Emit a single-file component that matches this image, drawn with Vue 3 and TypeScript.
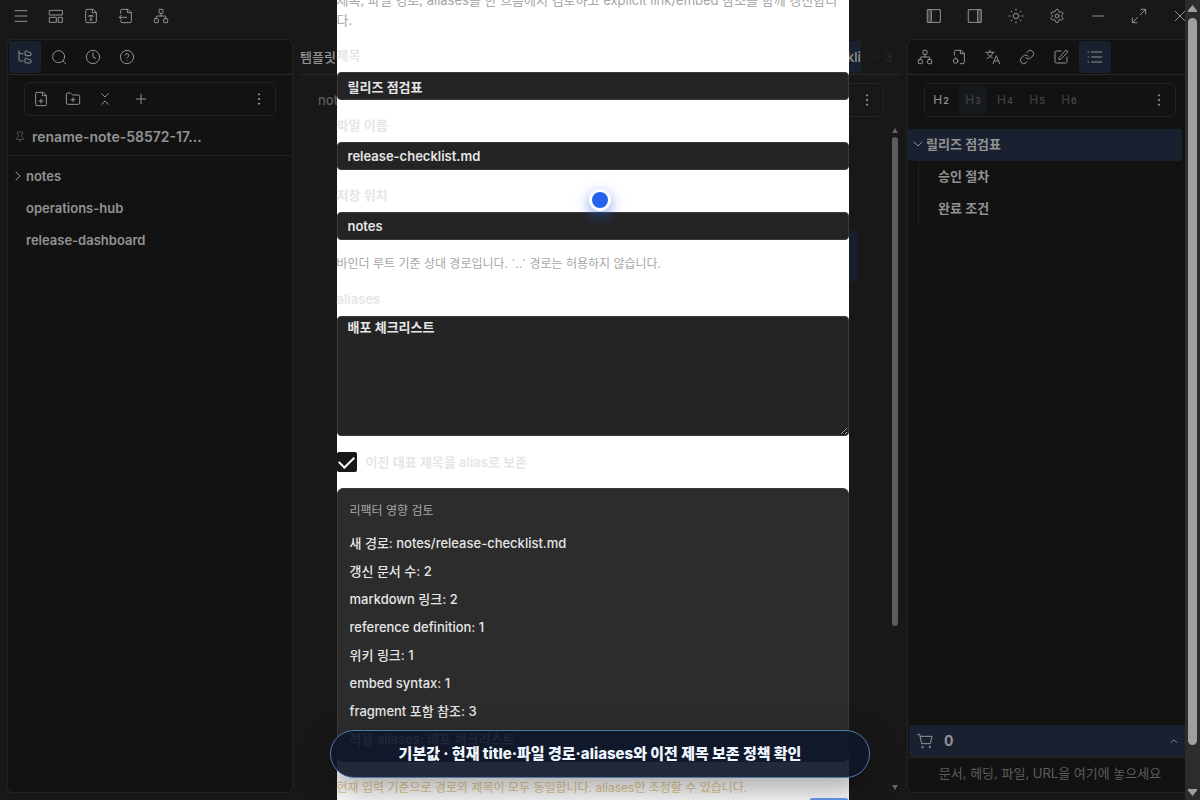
<script setup lang="ts">
import { ref } from 'vue'

interface Tool {
  name: string
  label: string
}

const icons: Record<string, string> = {
  menu: '<path d="M3 4h18M3 12h18M3 20h18"/>',
  layout: '<rect x="2.500" y="3.500" width="19" height="7"/><rect x="2.500" y="14" width="10" height="7.500"/><rect x="16" y="14" width="5.500" height="7.500"/>',
  fileType: '<path d="M15 2H6a2 2 0 0 0-2 2v16a2 2 0 0 0 2 2h12a2 2 0 0 0 2-2V7z"/><path d="M14 2v5h6M9 13v-1.500h6V13M12 11.500V18M10.500 18h3"/>',
  fileImport: '<path d="M4 8V4a2 2 0 0 1 2-2h9l5 5v13a2 2 0 0 1-2 2H6a2 2 0 0 1-2-2v-1"/><path d="M14 2v5h6M13 14H2M5 11l-3 3 3 3"/>',
  network: '<rect x="9" y="2" width="6" height="6" rx="1"/><rect x="2" y="16" width="6" height="6" rx="1"/><rect x="16" y="16" width="6" height="6" rx="1"/><path d="M5 16v-3a1 1 0 0 1 1-1h12a1 1 0 0 1 1 1v3M12 12V8"/>',
  folderTree: '<path d="M20 10a1 1 0 0 0 1-1V6a1 1 0 0 0-1-1h-2.500a1 1 0 0 1-.8-.4l-.9-1.200A1 1 0 0 0 15 3h-2a1 1 0 0 0-1 1v5a1 1 0 0 0 1 1ZM20 21a1 1 0 0 0 1-1v-3a1 1 0 0 0-1-1h-2.900a1 1 0 0 1-.88-.55l-.42-.85a1 1 0 0 0-.92-.6H13a1 1 0 0 0-1 1v5a1 1 0 0 0 1 1ZM3 5a2 2 0 0 0 2 2h4M3 3v13a2 2 0 0 0 2 2h4"/>',
  search: '<circle cx="11.500" cy="11.500" r="9"/><path d="m22 22-4-4"/>',
  clock: '<circle cx="12" cy="12" r="10"/><path d="M12 6v6l4 2"/>',
  help: '<circle cx="12" cy="12" r="10"/><path d="M9.100 9a3 3 0 0 1 5.800 1c0 2-3 3-3 3M12 17h.01"/>',
  filePlus: '<path d="M15 2H6a2 2 0 0 0-2 2v16a2 2 0 0 0 2 2h12a2 2 0 0 0 2-2V7z"/><path d="M14 2v5h6M9 15h6M12 18v-6"/>',
  folderPlus: '<path d="M12 10v6M9 13h6M20 20a2 2 0 0 0 2-2V8a2 2 0 0 0-2-2h-7.900a2 2 0 0 1-1.690-.9L9.600 3.900A2 2 0 0 0 7.930 3H4a2 2 0 0 0-2 2v13a2 2 0 0 0 2 2Z"/>',
  collapse: '<path d="m7 20 5-5 5 5M7 4l5 5 5-5"/>',
  plus: '<path d="M5 12h14M12 5v14"/>',
  more: '<g fill="currentColor"><circle cx="12" cy="5" r="1"/><circle cx="12" cy="12" r="1"/><circle cx="12" cy="19" r="1"/></g>',
  pin: '<path d="M12 17v5M9 10.800a2 2 0 0 1-1.100 1.800l-1.800.9A2 2 0 0 0 5 15.200V16a1 1 0 0 0 1 1h12a1 1 0 0 0 1-1v-.8a2 2 0 0 0-1.100-1.800l-1.800-.9A2 2 0 0 1 15 10.800V7a1 1 0 0 1 1-1 2 2 0 0 0 0-4H8a2 2 0 0 0 0 4 1 1 0 0 1 1 1z"/>',
  right: '<path d="m8 4 8 8-8 8"/>',
  down: '<path d="m4 8 8 8 8-8"/>',
  up: '<path d="m5 16 7-7 7 7"/>',
  sideLeft: '<rect x="2.500" y="2.500" width="19" height="19"/><path d="M8 2.500v19"/><path d="M5.200 3v18" stroke-opacity=".4" stroke-width="4"/>',
  sideRight: '<rect x="2.500" y="2.500" width="19" height="19"/><path d="M16 2.500v19"/><path d="M18.800 3v18" stroke-opacity=".4" stroke-width="4"/>',
  sun: '<circle cx="12" cy="12" r="4"/><path d="M12 1.500v2M12 20.500v2M4.600 4.600 6 6M18 18l1.400 1.400M1.500 12h2M20.500 12h2M6 18l-1.400 1.400M19.400 4.600 18 6"/>',
  gear: '<path d="M9.700 4.100a2.340 2.340 0 0 1 4.660 0 2.340 2.340 0 0 0 3.320 1.900 2.340 2.340 0 0 1 2.330 4 2.340 2.340 0 0 0 0 3.900 2.340 2.340 0 0 1-2.330 4 2.340 2.340 0 0 0-3.320 1.900 2.340 2.340 0 0 1-4.660 0 2.340 2.340 0 0 0-3.320-1.900 2.340 2.340 0 0 1-2.330-4 2.340 2.340 0 0 0 0-3.900A2.340 2.340 0 0 1 6.380 6a2.340 2.340 0 0 0 3.320-1.900"/><circle cx="12" cy="12" r="3"/>',
  minus: '<path d="M4 12h16"/>',
  expand: '<path d="M15 2h7v7M9 22H2v-7M22 2l-8 8M2 22l8-8"/>',
  close: '<path d="M5 5l14 14M19 5 5 19"/>',
  fileCog: '<path d="M5 9V4a2 2 0 0 1 2-2h8l5 5v13a2 2 0 0 1-2 2h-4"/><path d="M14 2v5h6"/><circle cx="7" cy="18" r="3.500"/><path d="M7 13v1.500"/>',
  translate: '<path d="M1 5h13M7.500 2v3M3 14c4-1 8-5 9-9M4 7c1 3 4 5 7 6M12 22l5-12 5 12M14 18h6"/>',
  link: '<path d="M10 13a5 5 0 0 0 7.540.54l3-3a5 5 0 0 0-7.070-7.070l-1.720 1.710"/><path d="M14 11a5 5 0 0 0-7.540-.54l-3 3a5 5 0 0 0 7.070 7.070l1.710-1.710"/>',
  edit: '<path d="M12 3H5a2 2 0 0 0-2 2v14a2 2 0 0 0 2 2h14a2 2 0 0 0 2-2v-7"/><path d="M18.400 2.600a2.100 2.100 0 0 1 3 3L12.400 14.600a2 2 0 0 1-.85.5l-2.900.85.85-2.900a2 2 0 0 1 .5-.85z"/>',
  list: '<path d="M7 4.500h15M7 12h15M7 19.500h15M1.500 4.500h1M1.500 12h1M1.500 19.500h1"/>',
  cart: '<circle cx="8" cy="21" r="1"/><circle cx="19" cy="21" r="1"/><path d="M1 2h3l3 14h13l2.500-11H5"/>',
}

const headerLeft: Tool[] = [
  { name: 'menu', label: '메뉴' },
  { name: 'layout', label: '레이아웃' },
  { name: 'fileType', label: '템플릿' },
  { name: 'fileImport', label: '가져오기' },
  { name: 'network', label: '그래프' },
]
const headerRight: Tool[] = [
  { name: 'sideLeft', label: '왼쪽 패널' },
  { name: 'sideRight', label: '오른쪽 패널' },
  { name: 'sun', label: '테마' },
  { name: 'gear', label: '설정' },
  { name: 'minus', label: '최소화' },
  { name: 'expand', label: '최대화' },
  { name: 'close', label: '닫기' },
]
const leftTabs: Tool[] = [
  { name: 'folderTree', label: '탐색기' },
  { name: 'search', label: '검색' },
  { name: 'clock', label: '최근' },
  { name: 'help', label: '도움말' },
]
const rightTabs: Tool[] = [
  { name: 'network', label: '그래프' },
  { name: 'fileCog', label: '속성' },
  { name: 'translate', label: '번역' },
  { name: 'link', label: '링크' },
  { name: 'edit', label: '편집' },
  { name: 'list', label: '개요' },
]
const treeTools: Tool[] = [
  { name: 'filePlus', label: '새 문서' },
  { name: 'folderPlus', label: '새 폴더' },
  { name: 'collapse', label: '모두 접기' },
  { name: 'plus', label: '추가' },
]
const levels = [2, 3, 4, 5, 6]
const summary = [
  '새 경로: notes/release-checklist.md',
  '갱신 문서 수: 2',
  'markdown 링크: 2',
  'reference definition: 1',
  '위키 링크: 1',
  'embed syntax: 1',
  'fragment 포함 참조: 3',
  '적용 aliases: 배포 체크리스트',
]

const title = ref('릴리즈 점검표')
const fileName = ref('release-checklist.md')
const folder = ref('notes')
const aliases = ref('배포 체크리스트')
const keepTitle = ref(true)
</script>

<template>
  <div class="app">
    <header class="topbar">
      <nav class="top-left">
        <button v-for="t in headerLeft" :key="t.name" type="button" :aria-label="t.label">
          <svg class="icon" viewBox="0 0 24 24" v-html="icons[t.name]" />
        </button>
      </nav>
      <nav class="top-right">
        <button v-for="t in headerRight" :key="t.name" type="button" :aria-label="t.label">
          <svg class="icon" viewBox="0 0 24 24" v-html="icons[t.name]" />
        </button>
      </nav>
    </header>

    <div class="workspace">
      <aside class="panel">
        <div class="tabs">
          <button v-for="(t, i) in leftTabs" :key="t.name" type="button" class="tab" :class="{ active: i === 0 }" :aria-label="t.label">
            <svg class="icon" viewBox="0 0 24 24" v-html="icons[t.name]" />
          </button>
        </div>
        <div class="toolbox tree-tools">
          <button v-for="t in treeTools" :key="t.name" type="button" :class="['tool', t.name]" :aria-label="t.label">
            <svg class="icon" viewBox="0 0 24 24" v-html="icons[t.name]" />
          </button>
          <button type="button" class="tool last" aria-label="더 보기">
            <svg class="icon" viewBox="0 0 24 24" v-html="icons.more" />
          </button>
        </div>
        <div class="binder">
          <svg class="icon pin" viewBox="0 0 24 24" v-html="icons.pin" />
          <strong>rename-note-58572-17...</strong>
        </div>
        <ul class="tree">
          <li><svg class="icon small" viewBox="0 0 24 24" v-html="icons.right" />notes</li>
          <li>operations-hub</li>
          <li>release-dashboard</li>
        </ul>
      </aside>

      <main class="editor">
        <div class="doc-tabs">
          <span class="doc-tab">템플릿</span>
          <span class="doc-tab current">release-checkli</span>
          <span class="overflow"><svg class="icon small" viewBox="0 0 24 24" v-html="icons.down" />3</span>
        </div>
        <div class="crumbs">
          <span>notes</span>
          <div class="toolbox">
            <button type="button" class="tool last" aria-label="더 보기">
              <svg class="icon" viewBox="0 0 24 24" v-html="icons.more" />
            </button>
          </div>
        </div>
        <div class="doc">
          <div class="doc-body"><div class="callout"></div></div>
          <div class="scroll">
            <svg viewBox="0 0 6 5"><path d="M3 0 6 5H0z" /></svg>
            <div class="scroll-track"><i></i></div>
            <svg viewBox="0 0 6 5"><path d="M0 0h6L3 5z" /></svg>
          </div>
        </div>
      </main>

      <aside class="panel outline">
        <div class="tabs">
          <button v-for="t in rightTabs" :key="t.name" type="button" class="tab" :class="{ active: t.name === 'list' }" :aria-label="t.label">
            <svg class="icon" viewBox="0 0 24 24" v-html="icons[t.name]" />
          </button>
        </div>
        <div class="toolbox">
          <button v-for="n in levels" :key="n" type="button" class="tool level" :class="{ first: n === 2, chosen: n === 3 }">
            H<small>{{ n }}</small>
          </button>
          <button type="button" class="tool last" aria-label="더 보기">
            <svg class="icon" viewBox="0 0 24 24" v-html="icons.more" />
          </button>
        </div>
        <div class="heading"><svg class="icon small" viewBox="0 0 24 24" v-html="icons.down" />릴리즈 점검표</div>
        <ul class="children">
          <li>승인 절차</li>
          <li>완료 조건</li>
        </ul>
        <section class="basket">
          <button type="button" class="basket-head">
            <svg class="icon" viewBox="0 0 24 24" v-html="icons.cart" />
            <b>0</b>
            <svg class="icon small" viewBox="0 0 24 24" v-html="icons.up" />
          </button>
          <p>문서, 헤딩, 파일, URL을 여기에 놓으세요</p>
        </section>
      </aside>
    </div>

    <div class="overlay">
      <form class="dialog" @submit.prevent>
        <p class="lead">제목, 파일 경로, aliases를 한 흐름에서 검토하고 explicit link/embed 참조를 함께 갱신합니다.</p>
        <label for="f-title">제목</label>
        <input id="f-title" v-model="title" type="text" />
        <label for="f-name">파일 이름</label>
        <input id="f-name" v-model="fileName" type="text" />
        <label for="f-folder">저장 위치</label>
        <input id="f-folder" v-model="folder" type="text" />
        <p class="hint">바인더 루트 기준 상대 경로입니다. `..` 경로는 허용하지 않습니다.</p>
        <label for="f-alias">aliases</label>
        <textarea id="f-alias" v-model="aliases"></textarea>
        <div class="check">
          <input id="f-keep" v-model="keepTitle" type="checkbox" />
          <label for="f-keep">이전 대표 제목을 alias로 보존</label>
        </div>
        <section class="impact">
          <h3>리팩터 영향 검토</h3>
          <ul>
            <li v-for="line in summary" :key="line">{{ line }}</li>
          </ul>
        </section>
        <p class="warning">현재 입력 기준으로 경로와 제목이 모두 동일합니다. aliases만 조정할 수 있습니다.</p>
        <button type="submit" class="submit" aria-label="적용"></button>
      </form>
    </div>

    <div class="page-scroll">
      <svg viewBox="0 0 9 7"><path d="M4.500 0 9 5.500V7H0V5.500z" /></svg>
      <div class="scroll-track"><i></i></div>
      <svg viewBox="0 0 9 7"><path d="M4.500 7 9 1.500V0H0v1.500z" /></svg>
    </div>
    <div class="pointer"></div>
    <div class="toast" role="status">기본값 · 현재 title·파일 경로·aliases와 이전 제목 보존 정책 확인</div>
  </div>
</template>

<style>
body {
  margin: 0;
  background: #181818;
}
</style>

<style scoped>
* {
  box-sizing: border-box;
}
.app {
  position: relative;
  display: flex;
  flex-direction: column;
  height: 100vh;
  overflow: hidden;
  background: #181818;
  color: #929292;
  font: 500 13px/20px Inter, "Noto Sans CJK KR", sans-serif;
}
button {
  padding: 0;
  border: 0;
  background: none;
  color: inherit;
  font: inherit;
  display: flex;
  align-items: center;
  justify-content: center;
}
ul, p, h3 {
  margin: 0;
  padding: 0;
  list-style: none;
}
.icon {
  display: block;
  flex: none;
  width: 16px;
  height: 16px;
  fill: none;
  stroke: currentColor;
  stroke-width: 1.5;
  stroke-linecap: round;
  stroke-linejoin: round;
}
.icon.small {
  width: 12px;
  height: 12px;
  stroke-width: 2;
}
.topbar {
  display: flex;
  justify-content: space-between;
  flex: none;
  height: 39px;
  padding: 0 0 7px 3px;
}
.top-left, .top-right {
  display: flex;
}
.top-left button {
  width: 35px;
}
.top-right button {
  width: 41px;
}
.workspace {
  display: flex;
  flex: 1;
  min-height: 0;
  padding: 0 7px 7px;
}
.panel {
  display: flex;
  flex-direction: column;
  flex: none;
  width: 286px;
  border: 1px solid #242424;
  border-radius: 6px;
  background: #121212;
}
.tabs {
  display: flex;
  gap: 2px;
  padding: 1px;
  border-bottom: 1px solid #272727;
}
.tab {
  width: 32px;
  height: 32px;
  border-radius: 4px;
}
.tab.active {
  background: #192130;
}
.toolbox {
  display: flex;
  align-items: center;
  gap: 4px;
  height: 34px;
  margin: 8px 16px 0;
  padding: 2px;
  border: 1px solid #222;
  border-radius: 6px;
}
.tree-tools {
  margin-top: 7px;
}
.tool {
  width: 28px;
  height: 28px;
  border-radius: 4px;
}
.tool.plus {
  margin-left: 4px;
}
.tool.last {
  margin-left: auto;
}
.binder {
  display: flex;
  align-items: center;
  gap: 6px;
  height: 40px;
  padding: 2px 6px 0;
  border-bottom: 1px solid #202020;
  font-size: 14px;
}
.binder strong {
  font-weight: 600;
}
.binder .pin {
  width: 12px;
  height: 12px;
  color: #5f5f5f;
}
.tree {
  padding-top: 4px;
}
.tree li {
  display: flex;
  align-items: center;
  height: 32px;
  padding-left: 18px;
  font-weight: 600;
}
.tree .icon {
  margin-left: -14px;
  margin-right: 2px;
}
.editor {
  display: flex;
  flex-direction: column;
  flex: 1;
  min-width: 0;
  margin: 0 6px 0 7px;
}
.doc-tabs {
  display: flex;
  align-items: center;
  height: 36px;
  padding-top: 2px;
  padding-bottom: 1px;
  border-bottom: 1px solid #272727;
}
.doc-tab.current {
  display: flex;
  align-items: center;
  justify-content: flex-end;
  height: 32px;
  margin-left: auto;
  padding-left: 12px;
  background: #192130;
}
.overflow {
  display: flex;
  align-items: center;
  gap: 4px;
  margin: 0 8px;
  color: #262626;
}
.crumbs {
  display: flex;
  align-items: center;
  height: 50px;
  padding-left: 18px;
  color: #5c5c5c;
}
.crumbs .toolbox {
  flex: 1;
  margin: 0 17px 0 24px;
  border-color: #242424;
  color: #929292;
}
.doc {
  display: flex;
  flex: 1;
  min-height: 0;
}
.doc-body {
  flex: 1;
  padding: 106px 34px 0 40px;
}
.callout {
  height: 50px;
  border-radius: 2px;
  background: #191f2a;
}
.scroll {
  display: flex;
  flex-direction: column;
  align-items: center;
  gap: 4px;
  width: 6px;
  margin-right: 3px;
  padding: 3px 0;
}
.scroll svg {
  width: 6px;
  height: 5px;
  fill: #666;
}
.scroll-track {
  flex: 1;
  width: 100%;
}
.scroll-track i {
  display: block;
  height: 76%;
  border-radius: 5px;
  background: #5c5c5c;
}
.level {
  display: block;
  color: #454545;
  font-size: 12px;
  line-height: 28px;
  font-weight: 400;
}
.level small {
  margin-left: 1px;
  font-size: 9px;
  font-weight: 600;
}
.level.first {
  color: #929292;
}
.level.chosen {
  background: #16191d;
}
.outline .toolbox {
  margin-bottom: 12px;
}
.heading {
  display: flex;
  align-items: center;
  gap: 2px;
  height: 32px;
  margin-right: 10px;
  padding: 0 0 2px 4px;
  border-radius: 3px;
  background: #192130;
  font-weight: 600;
}
.children {
  flex: 1;
  font-weight: 600;
}
.children li {
  display: flex;
  align-items: center;
  height: 32px;
  margin-left: 10px;
  padding: 0 0 2px 19px;
  border-left: 1px solid #202020;
}
.basket-head {
  width: calc(100% - 1px);
  height: 32px;
  margin-left: 1px;
  padding: 0 13px 0 8px;
  border-radius: 4px;
  background: #192130;
}
.basket-head b {
  flex: 1;
  margin-left: 11px;
  text-align: left;
  font-size: 14px;
}
.basket-head .small {
  width: 10px;
  height: 10px;
}
.basket p {
  height: 35px;
  border-top: 1px solid #272727;
  line-height: 30px;
  text-align: center;
  color: #5c5c5c;
  font-weight: 400;
}
.overlay {
  position: absolute;
  inset: 0 15px 0 0;
  display: flex;
  justify-content: center;
  align-items: flex-start;
  overflow: hidden;
}
.dialog {
  display: flex;
  flex-direction: column;
  width: 512px;
  margin-top: -10px;
  background: #fff;
  color: #e6e6e6;
}
.dialog label {
  font-weight: 600;
}
.dialog > label {
  height: 26px;
  margin-top: 16px;
  line-height: 18px;
}
.lead {
  color: #a6a6a6;
  font-weight: 400;
}
.dialog input[type='text'],
.dialog textarea {
  width: 100%;
  border: 1px solid #3a3a3a;
  border-radius: 4px;
  padding: 0 10px;
  background: #242424;
  color: #e6e6e6;
  font: inherit;
  font-weight: 600;
  outline: 0;
}
.dialog input[type='text'] {
  height: 28px;
}
.dialog textarea {
  height: 120px;
  resize: vertical;
}
.hint {
  margin-top: 14px;
  color: #a6a6a6;
  font-size: 12px;
  font-weight: 400;
}
.check {
  display: flex;
  align-items: center;
  gap: 9px;
  margin: 16px 0;
}
.check input {
  appearance: none;
  display: grid;
  place-items: center;
  width: 20px;
  height: 20px;
  margin: 0;
  border-radius: 2px;
  background: #18181b;
}
.check input:checked::before {
  content: '';
  width: 13px;
  height: 7px;
  margin-bottom: 4px;
  border: solid #fff;
  border-width: 0 0 2px 2px;
  transform: rotate(-45deg);
}
.impact {
  padding: 12px;
  border: 1px solid #3a3a3a;
  border-radius: 6px;
  background: #2c2c2c;
}
.impact h3 {
  margin-bottom: 12px;
  color: #a6a6a6;
  font-size: 12px;
  font-weight: 400;
}
.impact ul {
  display: grid;
  gap: 8px;
}
.warning {
  margin-top: 16px;
  color: #e2c98f;
  font-size: 12px;
  font-weight: 400;
}
.submit {
  align-self: flex-end;
  width: 40px;
  height: 32px;
  border-radius: 4px;
  background: #6a9af5;
}
.page-scroll {
  position: absolute;
  inset: 0 0 0 auto;
  display: flex;
  flex-direction: column;
  gap: 6px;
  width: 15px;
  padding: 5px 3px 4px;
  background: #2c2c2c;
}
.page-scroll svg {
  width: 9px;
  height: 7px;
  fill: #9f9f9f;
}
.page-scroll i {
  height: 95%;
  background: #9f9f9f;
}
.pointer {
  position: absolute;
  top: 189px;
  left: calc(50% - 11px);
  width: 22px;
  height: 22px;
  border: 3px solid #fff;
  border-radius: 50%;
  background: #2563eb;
  box-shadow: 0 4px 14px rgba(37, 99, 235, 0.6);
}
.toast {
  position: absolute;
  bottom: 22px;
  left: 50%;
  width: 540px;
  margin-left: -270px;
  padding: 13px 20px;
  border: 1px solid #5078a4;
  border-radius: 24px;
  background: rgba(15, 23, 42, 0.92);
  box-shadow: 0 12px 32px rgba(0, 0, 0, 0.35);
  color: #eff6ff;
  text-align: center;
  font-size: 15px;
  font-weight: 800;
}
</style>
